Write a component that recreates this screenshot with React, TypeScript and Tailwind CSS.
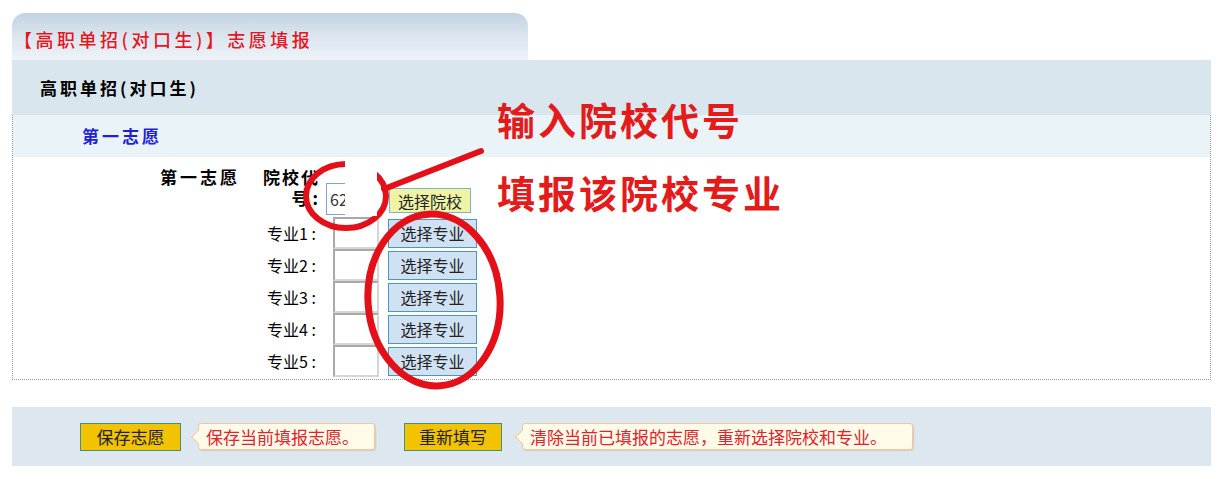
import React from "react";

function Tip({ className, children }: { className: string; children: React.ReactNode }) {
  return (
    <div
      className={
        "relative h-[27px] bg-[#fffbe9] border border-[#f3c79e] rounded-[3px] flex items-center pl-[7px] text-[17px] text-[#e2232b] shadow-[1px_1px_1px_rgba(210,160,110,0.35)] " +
        className
      }
    >
      <span className="absolute left-[-6px] top-[8px] w-[10px] h-[10px] rotate-45 bg-[#fffbe9] border-l border-b border-[#f3c79e]" />
      <span className="relative whitespace-nowrap">{children}</span>
    </div>
  );
}

export default function App() {
  const majors = [1, 2, 3, 4, 5];
  return (
    <div className="relative w-[1223px] h-[479px] overflow-hidden bg-white font-['Noto_Sans_CJK_SC','Noto_Sans',sans-serif] text-black">
      <div className="pl-[12px] pt-[13px]">
        <div className="w-[516px] h-[47px] rounded-t-[13px] bg-gradient-to-b from-[#c2d3e3] via-[#dbe6ef] to-[#eef3f8] pl-[2px] pt-[14px]">
          <span className="block text-[18px] font-medium tracking-[3.5px] text-[#e8141e] leading-[24px] whitespace-nowrap">
            【高职单招(对口生)】志愿填报
          </span>
        </div>
        <div className="w-[1199px]">
          <div className="h-[55px] bg-[#dae6ee] flex items-center pl-[28px] text-[17px] font-bold tracking-[3px]">
            高职单招(对口生)
          </div>
          <div className="border-x border-b border-dotted border-[#9a9a9a]">
            <div className="h-[42px] bg-[#eaf3f7] flex items-center pl-[69px] text-[17px] font-bold tracking-[3px] text-[#1f1fd8]">
              第一志愿
            </div>
            <div className="h-[222px] flex pl-[147px] pt-[9px]">
              <div className="w-[98px] text-[17px] font-bold tracking-[3px] leading-[22px] whitespace-nowrap">
                第一志愿
              </div>
              <div className="flex flex-col">
                <div className="flex h-[51px]">
                  <div className="w-[62px] flex flex-col items-end text-[17px] font-bold leading-[21px] whitespace-nowrap">
                    <span className="tracking-[2px]">院校代</span>
                    <span className="pr-[2px]">号 :</span>
                  </div>
                  <input
                    readOnly
                    value="62"
                    className="ml-[6px] mt-[17px] w-[50px] h-[32px] border border-[#7aa7d6] px-[3px] text-[16px] text-[#333] outline-none"
                  />
                  <button className="ml-[13px] mt-[22px] w-[82px] h-[25px] bg-[#eef3a6] border border-[#7fb3c9] text-[16px] leading-none text-[#222]">
                    选择院校
                  </button>
                </div>
                {majors.map((n) => (
                  <div key={n} className="flex h-[32px] items-center">
                    <div className="w-[62px] text-right pr-[4px] text-[16px] whitespace-nowrap">
                      专业{n} :
                    </div>
                    <div className="ml-[13px] w-[46px] h-[32px] border-2 border-t-[#a9a9a9] border-l-[#a9a9a9] border-b-[#d6d6d6] border-r-[#d6d6d6] bg-white" />
                    <button className="ml-[9px] w-[89px] h-[29px] bg-[#cfe1f3] border border-[#4d98ba] text-[16px] leading-none text-[#222]">
                      选择专业
                    </button>
                  </div>
                ))}
              </div>
            </div>
          </div>
        </div>
        <div className="mt-[27px] w-[1199px] h-[59px] bg-[#dce7f0] flex items-center pl-[68px]">
          <button className="w-[101px] h-[28px] bg-[#f2c300] border border-[#4a8c7e] text-[17px] leading-none text-[#222]">
            保存志愿
          </button>
          <Tip className="ml-[17px] w-[177px]">保存当前填报志愿。</Tip>
          <button className="ml-[29px] w-[98px] h-[28px] bg-[#f2c300] border border-[#4a8c7e] text-[17px] leading-none text-[#222]">
            重新填写
          </button>
          <Tip className="ml-[20px] w-[391px]">清除当前已填报的志愿，重新选择院校和专业。</Tip>
        </div>
      </div>

      <svg className="absolute left-0 top-0 pointer-events-none" width="1223" height="479">
        <ellipse cx="346" cy="196" rx="40" ry="32" fill="none" stroke="#e3101a" strokeWidth="6" />
        <rect x="345" y="160" width="32" height="56" fill="white" />
        <line x1="384" y1="189" x2="481" y2="151" stroke="#e3101a" strokeWidth="6" strokeLinecap="round" />
        <ellipse
          cx="434"
          cy="300"
          rx="66"
          ry="86"
          fill="none"
          stroke="#e3101a"
          strokeWidth="7"
          transform="rotate(-4 434 300)"
        />
      </svg>
      <div className="absolute left-[497px] top-[97px] text-[38px] font-bold tracking-[3px] leading-[44px] text-[#e31b1b] whitespace-nowrap">
        输入院校代号
      </div>
      <div className="absolute left-[497px] top-[170px] text-[38px] font-bold tracking-[3px] leading-[44px] text-[#e31b1b] whitespace-nowrap">
        填报该院校专业
      </div>
    </div>
  );
}
